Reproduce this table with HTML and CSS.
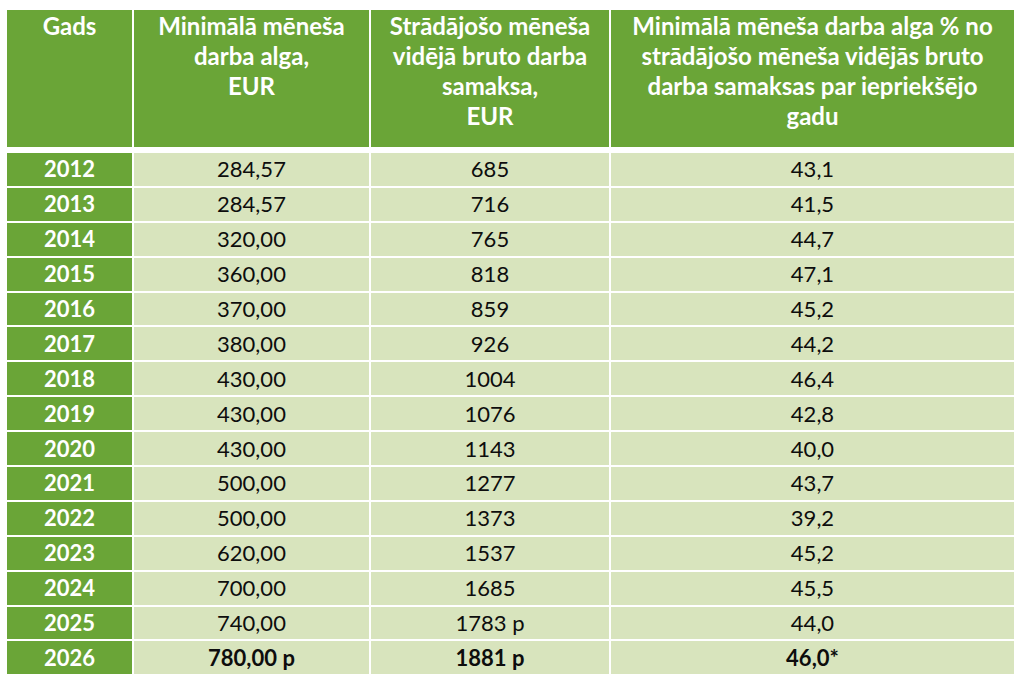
FILE: index.html
```html
<!DOCTYPE html>
<html lang="lv">
<head>
<meta charset="utf-8">
<title>Minimālā alga</title>
<link rel="stylesheet" href="styles.css">
</head>
<body>
<div class="wrap">
<table class="wage">
  <colgroup>
    <col class="c1"><col class="c2"><col class="c3"><col class="c4">
  </colgroup>
  <thead>
    <tr>
      <th>Gads</th>
      <th>Minimālā mēneša<br>darba alga,<br>EUR</th>
      <th>Strādājošo mēneša<br>vidējā bruto darba<br>samaksa,<br>EUR</th>
      <th>Minimālā mēneša darba alga % no<br>strādājošo mēneša vidējās bruto<br>darba samaksas par iepriekšējo<br>gadu</th>
    </tr>
  </thead>
  <tbody>
    <tr><th>2012</th><td>284,57</td><td>685</td><td>43,1</td></tr>
    <tr><th>2013</th><td>284,57</td><td>716</td><td>41,5</td></tr>
    <tr><th>2014</th><td>320,00</td><td>765</td><td>44,7</td></tr>
    <tr><th>2015</th><td>360,00</td><td>818</td><td>47,1</td></tr>
    <tr><th>2016</th><td>370,00</td><td>859</td><td>45,2</td></tr>
    <tr><th>2017</th><td>380,00</td><td>926</td><td>44,2</td></tr>
    <tr><th>2018</th><td>430,00</td><td>1004</td><td>46,4</td></tr>
    <tr><th>2019</th><td>430,00</td><td>1076</td><td>42,8</td></tr>
    <tr><th>2020</th><td>430,00</td><td>1143</td><td>40,0</td></tr>
    <tr><th>2021</th><td>500,00</td><td>1277</td><td>43,7</td></tr>
    <tr><th>2022</th><td>500,00</td><td>1373</td><td>39,2</td></tr>
    <tr><th>2023</th><td>620,00</td><td>1537</td><td>45,2</td></tr>
    <tr><th>2024</th><td>700,00</td><td>1685</td><td>45,5</td></tr>
    <tr><th>2025</th><td>740,00</td><td>1783 p</td><td>44,0</td></tr>
    <tr class="strong"><th>2026</th><td>780,00 p</td><td>1881 p</td><td>46,0*</td></tr>
  </tbody>
</table>
</div>
</body>
</html>
```
FILE: styles.css
```css
html, body {
  margin: 0;
  padding: 0;
  background: #ffffff;
}
.wrap {
  padding: 8px 0 0 5px;
}
.wage {
  border-collapse: separate;
  border-spacing: 2px;
  table-layout: fixed;
  width: 1011px;
  font-family: Lato, "Open Sans", sans-serif;
  font-size: 22px;
  color: #0d0d0d;
}
.c1 { width: 125px; }
.c2 { width: 235px; }
.c3 { width: 238px; }
.c4 { width: 403px; }
.wage thead th {
  background: #6aa537;
  color: #ffffff;
  font-weight: 700;
  font-size: 24px;
  vertical-align: top;
  text-align: center;
  height: 141px;
  padding: 1px 0 0 0;
  box-sizing: border-box;
  line-height: 30px;
  border-bottom: 4px solid #ffffff;
  background-clip: padding-box;
}
.wage tbody th {
  background: #6aa537;
  color: #ffffff;
  font-weight: 700;
  text-align: center;
  padding: 0;
  height: 32.9px;
  line-height: 28px;
}
.wage tbody td {
  background: #d8e4bd;
  text-align: center;
  padding: 0;
  height: 32.9px;
  line-height: 28px;
}
.wage tbody tr.strong td {
  font-weight: 700;
}
```
